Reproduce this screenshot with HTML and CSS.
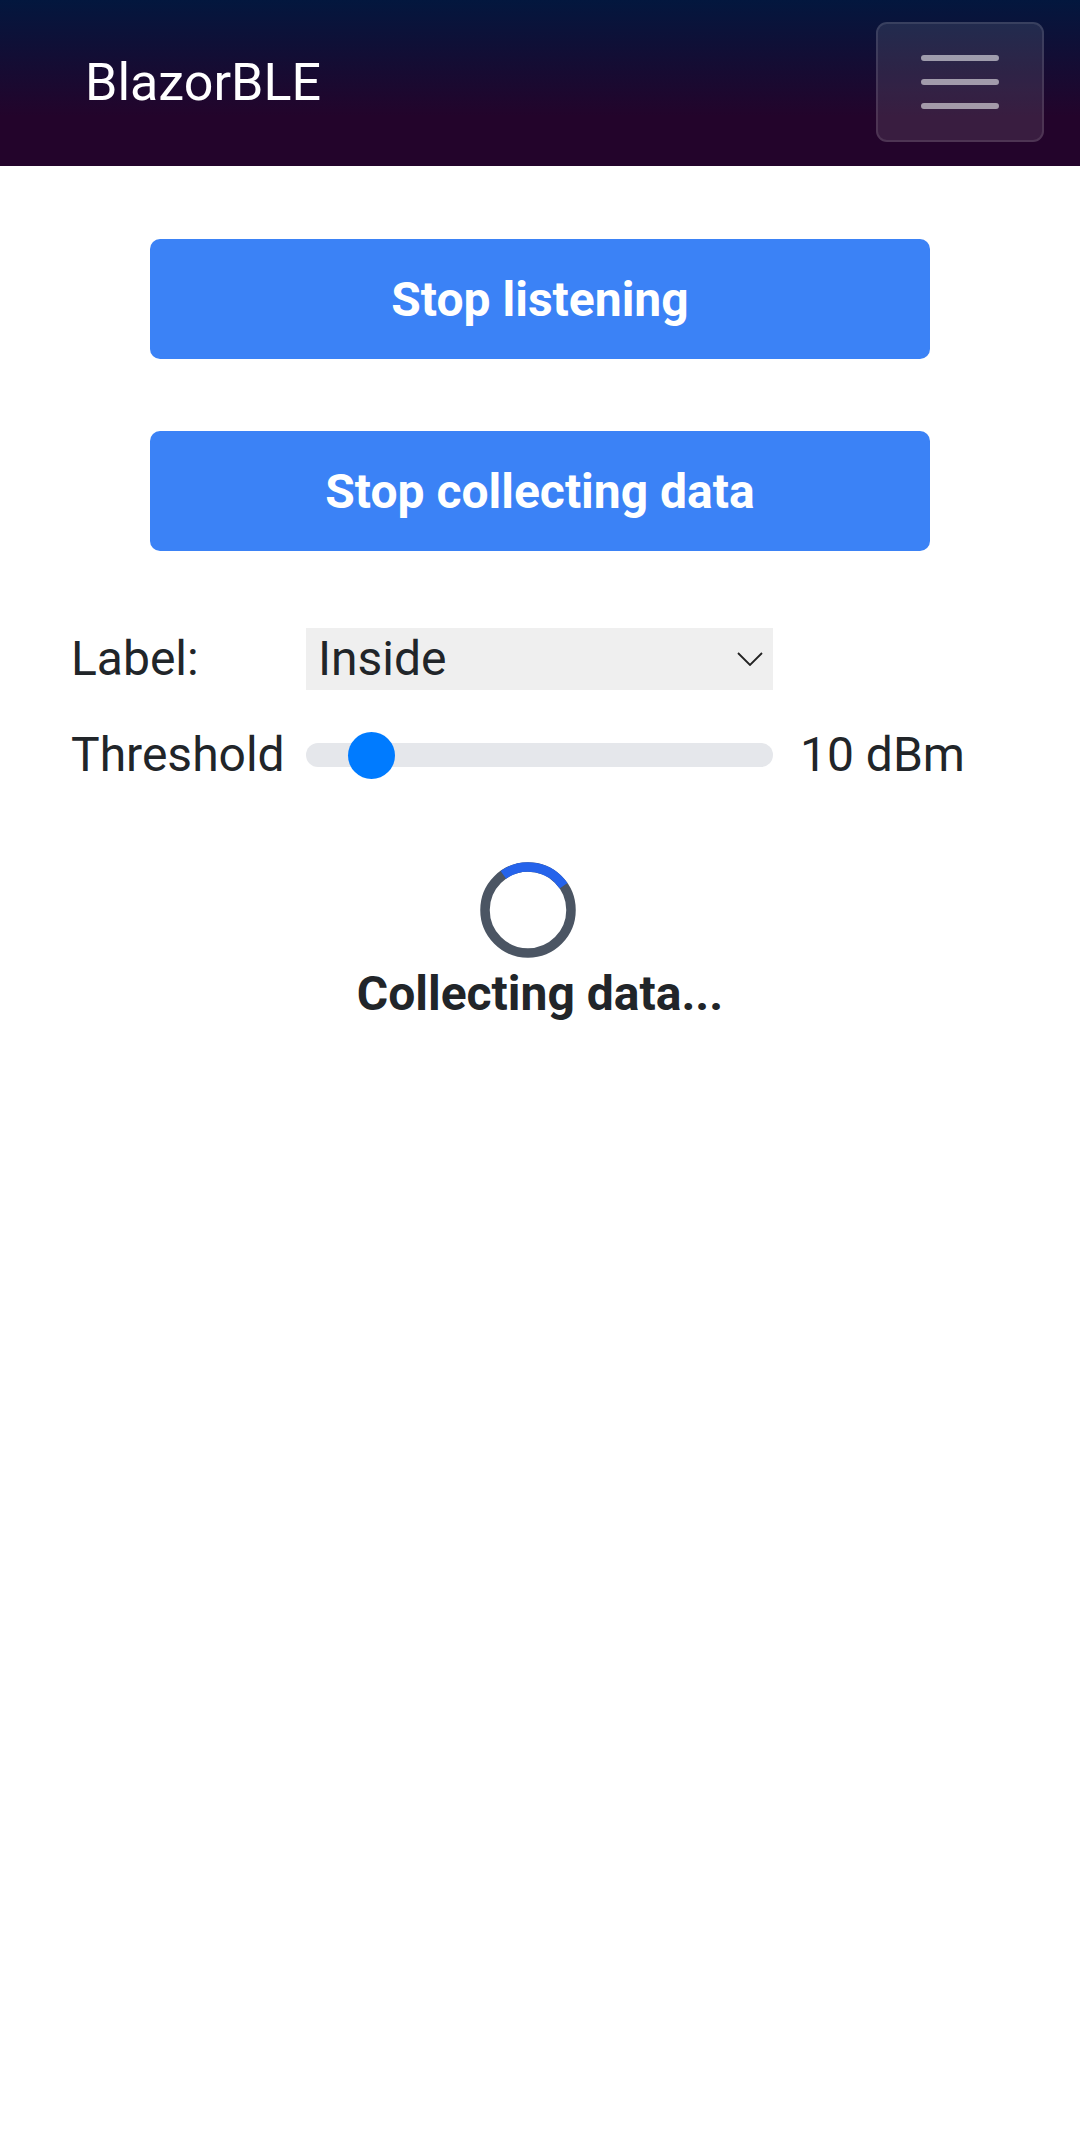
FILE: index.html
```html
<!DOCTYPE html>
<html lang="en">
<head>
<meta charset="utf-8">
<title>BlazorBLE</title>
<link rel="stylesheet" href="styles.css">
</head>
<body>
<header class="top-bar">
  <a class="brand" href="#">BlazorBLE</a>
  <button class="toggler" type="button" aria-label="Navigation menu">
    <svg class="toggler-icon" width="80" height="60" viewBox="0 0 80 60">
      <path d="M4 6H76M4 30H76M4 54H76" stroke="rgba(255,255,255,0.55)" stroke-width="6" stroke-linecap="round" fill="none"/>
    </svg>
  </button>
</header>
<main class="content">
  <button class="action-btn" type="button">Stop listening</button>
  <button class="action-btn second" type="button">Stop collecting data</button>

  <div class="form-grid">
    <label class="field-label" for="label-select">Label:</label>
    <div class="select-wrap">
      <select id="label-select" class="select">
        <option>Inside</option>
        <option>Outside</option>
      </select>
      <svg class="chevron" width="26" height="14" viewBox="0 0 26 14">
        <path d="M1 1L13 13L25 1" stroke="#222" stroke-width="1.8" fill="none"/>
      </svg>
    </div>
    <div class="spacer"></div>

    <label class="field-label" for="threshold">Threshold</label>
    <input id="threshold" class="range" type="range" min="0" max="100" value="10">
    <div class="range-value">10 dBm</div>
  </div>

  <div class="loading">
    <svg class="spinner" width="96" height="96" viewBox="0 0 96 96">
      <circle cx="48" cy="48" r="43" stroke="#4b5563" stroke-width="9.5" fill="none"/>
      <circle cx="48" cy="48" r="43" stroke="#2563eb" stroke-width="9.5" fill="none"
        stroke-dasharray="68 400" transform="rotate(-125 48 48)"/>
    </svg>
    <div class="loading-text">Collecting data...</div>
  </div>
</main>
</body>
</html>
```
FILE: styles.css
```css
* { box-sizing: border-box; }

html, body {
  margin: 0;
  padding: 0;
  background: #ffffff;
}

body {
  font-family: Roboto, "Liberation Sans", Arial, sans-serif;
  font-size: 48px;
  color: #212529;
}

.top-bar {
  height: 166px;
  display: flex;
  align-items: center;
  justify-content: space-between;
  padding: 0 36px 0 85px;
  background: linear-gradient(180deg, rgb(3, 23, 62) 0%, rgb(35, 4, 43) 70%);
}

.brand {
  font-size: 52px;
  line-height: 1;
  color: #ffffff;
  text-decoration: none;
}

.toggler {
  width: 168px;
  height: 120px;
  margin-top: -2px;
  display: flex;
  align-items: center;
  justify-content: center;
  padding: 0;
  background: rgba(255, 255, 255, 0.1);
  border: 2px solid rgba(255, 255, 255, 0.1);
  border-radius: 11px;
}

.toggler-icon { display: block; }

.content {
  padding-top: 73px;
}

.action-btn {
  display: flex;
  align-items: center;
  justify-content: center;
  width: 780px;
  height: 120px;
  margin: 0 auto;
  padding: 0;
  border: none;
  border-radius: 10px;
  background: #3b82f6;
  color: #ffffff;
  font-family: Roboto, "Liberation Sans", Arial, sans-serif;
  font-size: 48px;
  font-weight: 700;
}

.action-btn.second {
  margin-top: 72px;
}

.form-grid {
  display: grid;
  grid-template-columns: 235px 467px auto;
  grid-auto-rows: 62px;
  row-gap: 34px;
  align-items: center;
  margin-top: 77px;
  padding-left: 71px;
}

.field-label {
  line-height: 1;
  white-space: nowrap;
}

.select-wrap {
  position: relative;
  height: 62px;
}

.select {
  appearance: none;
  -webkit-appearance: none;
  width: 100%;
  height: 62px;
  margin: 0;
  padding: 0 60px 0 12px;
  border: none;
  border-radius: 0;
  background: #efefef;
  color: #212529;
  font-family: Roboto, "Liberation Sans", Arial, sans-serif;
  font-size: 48px;
  line-height: 62px;
}

.chevron {
  position: absolute;
  right: 10px;
  top: 24px;
  pointer-events: none;
}

.range {
  -webkit-appearance: none;
  appearance: none;
  width: 467px;
  height: 48px;
  margin: 0;
  padding: 0;
  background: transparent;
}

.range::-webkit-slider-runnable-track {
  height: 24px;
  border-radius: 12px;
  background: #e5e7eb;
}

.range::-webkit-slider-thumb {
  -webkit-appearance: none;
  appearance: none;
  width: 47px;
  height: 47px;
  margin-top: -11.5px;
  border: none;
  border-radius: 50%;
  background: #007bff;
}

.range-value {
  padding-left: 27px;
  line-height: 1;
  white-space: nowrap;
}

.loading {
  display: flex;
  flex-direction: column;
  align-items: center;
  margin-top: 76px;
}

.spinner {
  display: block;
  margin-right: 24px;
}

.loading-text {
  margin-top: 7px;
  font-weight: 700;
  font-size: 48px;
}
```
